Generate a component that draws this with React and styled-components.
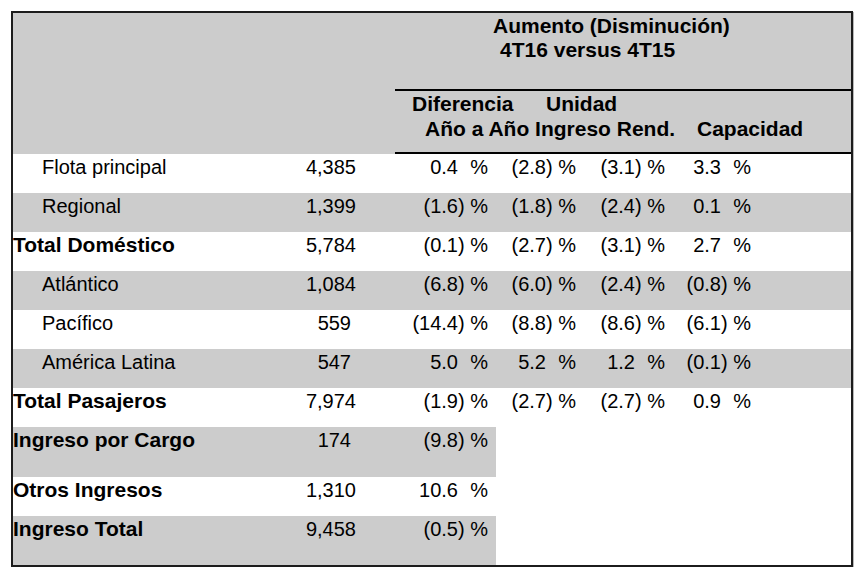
import React from 'react';
import styled, { createGlobalStyle } from 'styled-components';

const GRAY = '#cccccc';
const COLS = '262px 120px 101px 88px 89px 86px 1fr';

const GlobalStyle = createGlobalStyle`
  html, body {
    margin: 0;
    padding: 0;
    background: #ffffff;
  }
  body {
    font-family: "Liberation Sans", Arial, sans-serif;
    color: #000;
  }
`;

const Page = styled.div`
  padding: 11px 0 0 11px;
`;

const Frame = styled.div`
  width: 838px;
  height: 552px;
  border: 2px solid #1c1c1c;
  box-shadow: 1px 1px 0 #b8b8b8;
  display: flex;
  flex-direction: column;
  overflow: hidden;
`;

const Header = styled.div`
  display: grid;
  grid-template-columns: 382px 1fr;
  background: ${GRAY};
  font-size: 21px;
  font-weight: bold;
  line-height: 24px;
`;

const HeadRight = styled.div`
  display: flex;
  flex-direction: column;
`;

const Title = styled.div`
  height: 75px;
  padding-top: 1px;
  border-bottom: 2px solid #000;
`;

const TitleLine = styled.div`
  padding-left: ${p => p.$indent}px;
`;

const SubHead = styled.div`
  height: 60px;
  padding-top: 1px;
  border-bottom: 2px solid #000;
  line-height: 24.5px;
`;

const SubLine = styled.div`
  display: grid;
  grid-template-columns: ${p => p.$first}px auto;
  padding-left: ${p => p.$indent}px;
  white-space: pre;
`;

const Body = styled.div`
  flex: 1;
  display: flex;
  flex-direction: column;
`;

const shades = {
  full: GRAY,
  part: `linear-gradient(to right, ${GRAY} 483px, transparent 483px)`,
  none: 'transparent'
};

const Row = styled.div`
  display: grid;
  grid-template-columns: ${COLS};
  height: ${p => (p.$fill ? 'auto' : `${p.$h || 39}px`)};
  flex: ${p => (p.$fill ? 1 : 'none')};
  background: ${p => shades[p.$shade || 'none']};
  font-size: 20px;
  line-height: 22px;
  padding-top: 2px;
  box-sizing: border-box;
`;

const Label = styled.div`
  padding-left: ${p => (p.$indent ? 29 : 0)}px;
  font-weight: ${p => (p.$bold ? 'bold' : 'normal')};
  font-size: ${p => (p.$bold ? 21 : 20)}px;
  white-space: nowrap;
`;

const Amount = styled.div`
  text-align: right;
  padding-right: ${p => (p.$narrow ? 44 : 39)}px;
`;

const Pct = styled.div`
  text-align: right;
  padding-right: 8px;
  white-space: pre;
`;

const Ghost = styled.span`
  visibility: hidden;
`;

const rows = [
  { label: 'Flota principal', indent: true, amount: '4,385', pcts: ['0.4', '(2.8)', '(3.1)', '3.3'] },
  { label: 'Regional', indent: true, amount: '1,399', pcts: ['(1.6)', '(1.8)', '(2.4)', '0.1'], shade: 'full' },
  { label: 'Total Doméstico', bold: true, amount: '5,784', pcts: ['(0.1)', '(2.7)', '(3.1)', '2.7'] },
  { label: 'Atlántico', indent: true, amount: '1,084', pcts: ['(6.8)', '(6.0)', '(2.4)', '(0.8)'], shade: 'full' },
  { label: 'Pacífico', indent: true, amount: '559', narrow: true, pcts: ['(14.4)', '(8.8)', '(8.6)', '(6.1)'] },
  { label: 'América Latina', indent: true, amount: '547', narrow: true, pcts: ['5.0', '5.2', '1.2', '(0.1)'], shade: 'full' },
  { label: 'Total Pasajeros', bold: true, amount: '7,974', pcts: ['(1.9)', '(2.7)', '(2.7)', '0.9'] },
  { label: 'Ingreso por Cargo', bold: true, amount: '174', narrow: true, pcts: ['(9.8)'], shade: 'part', h: 50 },
  { label: 'Otros Ingresos', bold: true, amount: '1,310', pcts: ['10.6'] },
  { label: 'Ingreso Total', bold: true, amount: '9,458', pcts: ['(0.5)'], shade: 'part', fill: true }
];

const PctCell = ({ value }) => (
  <Pct>
    {value}
    {!value.endsWith(')') && <Ghost>)</Ghost>}
    {' %'}
  </Pct>
);

export default function App() {
  return (
    <Page>
      <GlobalStyle />
      <Frame>
        <Header>
          <div />
          <HeadRight>
            <Title>
              <TitleLine $indent={98}>Aumento (Disminución)</TitleLine>
              <TitleLine $indent={105}>4T16 versus 4T15</TitleLine>
            </Title>
            <SubHead>
              <SubLine $indent={17} $first={134}>
                <span>Diferencia</span>
                <span>Unidad</span>
              </SubLine>
              <SubLine $indent={30} $first={272}>
                <span>Año a Año Ingreso Rend.</span>
                <span>Capacidad</span>
              </SubLine>
            </SubHead>
          </HeadRight>
        </Header>
        <Body>
          {rows.map(r => (
            <Row key={r.label} $shade={r.shade} $h={r.h} $fill={r.fill}>
              <Label $indent={r.indent} $bold={r.bold}>{r.label}</Label>
              <Amount $narrow={r.narrow}>{r.amount}</Amount>
              {r.pcts.map((p, i) => (
                <PctCell key={i} value={p} />
              ))}
            </Row>
          ))}
        </Body>
      </Frame>
    </Page>
  );
}
